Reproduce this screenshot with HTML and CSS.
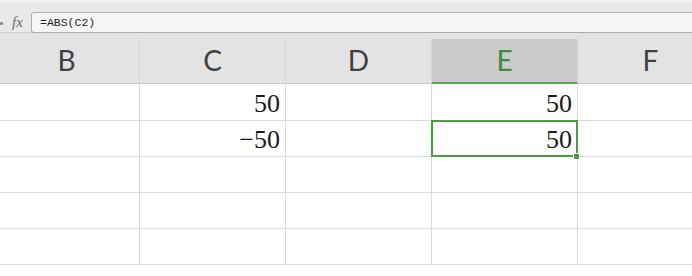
FILE: index.html
```html
<!doctype html>
<html lang="en">
  <head>
    <meta charset="utf-8" />
    <title>ABS</title>
    <link rel="stylesheet" href="styles.css">
  </head>
  <body>
    <div class="formula-bar">
      <span class="name-tail"></span>
      <span class="fx">fx</span>
      <div class="formula">=ABS(C2)</div>
    </div>
    <div class="band"></div>

    <div class="sheet">
      <div class="col-head">B</div>
      <div class="col-head">C</div>
      <div class="col-head">D</div>
      <div class="col-head active">E</div>
      <div class="col-head">F</div>

      <div class="cell"></div>
      <div class="cell">50</div>
      <div class="cell"></div>
      <div class="cell">50</div>
      <div class="cell"></div>

      <div class="cell"></div>
      <div class="cell">&minus;50</div>
      <div class="cell"></div>
      <div class="cell selected">50</div>
      <div class="cell"></div>

      <div class="cell"></div><div class="cell"></div><div class="cell"></div><div class="cell"></div><div class="cell"></div>
      <div class="cell"></div><div class="cell"></div><div class="cell"></div><div class="cell"></div><div class="cell"></div>
      <div class="cell"></div><div class="cell"></div><div class="cell"></div><div class="cell"></div><div class="cell"></div>
    </div>
  </body>
</html>
```

FILE: styles.css
```css
*{
  margin: 0;
  padding: 0;
  box-sizing: border-box;
}

body{
  width: 692px;
  height: 276px;
  overflow: hidden;
  background-color: #ffffff;
  font-family: 'Lato', sans-serif;
}

/* formula bar */
.formula-bar{
  height: 33px;
  padding-top: 12px;
  display: flex;
  align-items: flex-start;
  background: linear-gradient(#f2f2f2 0, #f2f2f2 3px, #e9e9e9 3px);
  border-bottom: 1px solid #cfcfcf;
}

.name-tail{
  width: 3px;
  height: 3px;
  margin-top: 10px;
  background-color: #8a8a8a;
  border-radius: 1px;
}

.fx{
  width: 28px;
  padding-left: 9px;
  font-family: 'Liberation Serif', serif;
  font-style: italic;
  font-size: 15px;
  line-height: 20px;
  color: #6a6a6a;
}

.formula{
  flex: 1;
  height: 21px;
  margin-right: -10px;
  padding-left: 8px;
  border: 1px solid #ababab;
  border-radius: 3px;
  background-color: #f6f6f6;
  font-family: 'Liberation Mono', monospace;
  font-size: 11.5px;
  line-height: 19px;
  color: #222222;
}

.band{
  height: 6px;
  background-color: #e3e3e3;
}

/* grid */
.sheet{
  display: grid;
  grid-template-columns: repeat(5, 146px);
  grid-template-rows: 45px 37px repeat(4, 36px);
  margin-left: -6px;
}

.col-head{
  display: flex;
  align-items: center;
  justify-content: center;
  background-color: #e3e3e3;
  border-right: 1px solid #d2d2d2;
  border-bottom: 1px solid #c8c8c8;
  font-size: 28px;
  color: #404040;
  padding-bottom: 2px;
}

.col-head.active{
  background-color: #cbcbcb;
  color: #3e8a3c;
  border-bottom: 2px solid #5aa552;
}

.cell{
  display: flex;
  align-items: flex-end;
  justify-content: flex-end;
  padding: 0 5px 3px 0;
  border-right: 1px solid #dadada;
  border-bottom: 1px solid #dadada;
  font-family: 'Liberation Serif', serif;
  font-size: 26px;
  line-height: 26px;
  color: #1a1a1a;
}

.cell.selected{
  position: relative;
}

.cell.selected::after{
  content: "";
  position: absolute;
  top: -1px;
  left: -1px;
  right: -1px;
  bottom: -1px;
  border: 2px solid #4f9a47;
}

.cell.selected::before{
  content: "";
  position: absolute;
  right: -3px;
  bottom: -4px;
  width: 5px;
  height: 5px;
  background-color: #4f9a47;
  border: 1px solid #ffffff;
  z-index: 1;
}
```
